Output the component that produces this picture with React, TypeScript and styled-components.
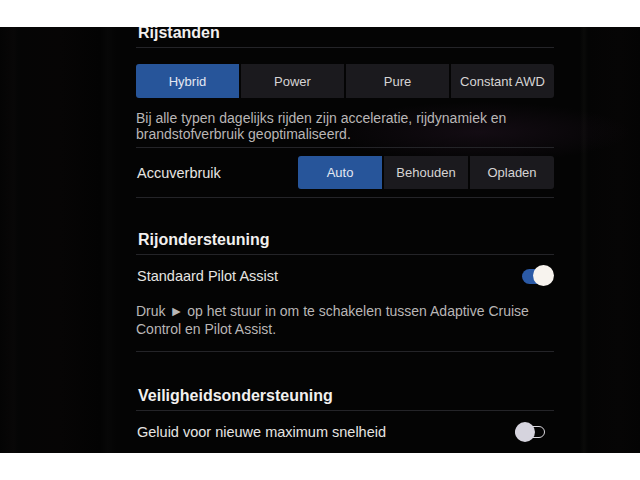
import styled, { createGlobalStyle } from "styled-components";

const GlobalStyle = createGlobalStyle`
  html, body {
    margin: 0;
    padding: 0;
    background: #ffffff;
  }
  body {
    font-family: "Liberation Sans", Arial, sans-serif;
  }
`;

const Page = styled.div`
  width: 640px;
  height: 480px;
  display: flex;
  flex-direction: column;
  background: #ffffff;
`;

const WhiteBand = styled.div`
  height: 27px;
  flex: none;
`;

const Photo = styled.div`
  height: 426px;
  flex: none;
  overflow: hidden;
  display: flex;
  background:
    radial-gradient(ellipse 150px 30px at 480px 105px, rgba(55, 30, 55, 0.3), transparent),
    linear-gradient(90deg, #040404 0, #080707 14px, #050505 18px, #060505 60px, #030303 100px, #070707 108px, #040404 116px, #040404 580px, #0a0a09 584px, #040404 588px, #060505 620px, #040404 640px);
`;

const Screen = styled.div`
  margin-left: 136px;
  width: 418px;
  margin-top: -16px;
  display: flex;
  flex-direction: column;
  color: #e9e7e6;
`;

const SectionTitle = styled.div<{ $top: number }>`
  padding: ${(p) => p.$top}px 0 4px 2px;
  font-size: 16px;
  line-height: 20px;
  font-weight: 700;
  color: #f2f0ef;
  border-bottom: 1px solid #242428;
`;

const Segmented = styled.div<{ $cols: number }>`
  display: grid;
  grid-template-columns: repeat(${(p) => p.$cols}, 1fr);
  gap: 2px;
  border-radius: 3px;
  overflow: hidden;
`;

const Segment = styled.div<{ $active?: boolean }>`
  height: 34px;
  display: flex;
  align-items: center;
  justify-content: center;
  font-size: 13px;
  color: ${(p) => (p.$active ? "#e4e8f2" : "#d6d4d4")};
  background: ${(p) => (p.$active ? "#27559a" : "#1b1a1e")};
`;

const ModeBlock = styled.div`
  padding-top: 16px;
  border-bottom: 1px solid #242428;
`;

const Description = styled.p<{ $lh: number; $pt: number; $pb: number }>`
  margin: 0;
  padding: ${(p) => p.$pt}px 0 ${(p) => p.$pb}px 0;
  font-size: 14px;
  line-height: ${(p) => p.$lh}px;
  color: #b9b6b6;
`;

const Row = styled.div<{ $h: number }>`
  height: ${(p) => p.$h}px;
  display: flex;
  align-items: center;
  justify-content: space-between;
`;

const Label = styled.span`
  font-size: 14.5px;
  color: #e6e4e2;
  padding-left: 1px;
`;

const Divided = styled.div`
  border-bottom: 1px solid #242428;
`;

const AccuSegments = styled(Segmented)`
  width: 256px;
  & > div {
    height: 33px;
  }
`;

const Switch = styled.div<{ $on?: boolean }>`
  position: relative;
  width: 32px;
  height: 22px;
  margin-right: ${(p) => (p.$on ? 0 : 7)}px;
`;

const Track = styled.div<{ $on?: boolean }>`
  position: absolute;
  left: 0;
  top: ${(p) => (p.$on ? 4 : 5)}px;
  width: ${(p) => (p.$on ? 24 : 30)}px;
  height: ${(p) => (p.$on ? 15 : 12)}px;
  border-radius: 8px;
  box-sizing: border-box;
  background: ${(p) => (p.$on ? "#2b5aa6" : "transparent")};
  border: ${(p) => (p.$on ? "none" : "1.5px solid #d9d6dc")};
`;

const Knob = styled.div<{ $on?: boolean }>`
  position: absolute;
  top: ${(p) => (p.$on ? 0 : 1)}px;
  left: ${(p) => (p.$on ? 11 : 0)}px;
  width: ${(p) => (p.$on ? 21 : 20)}px;
  height: ${(p) => (p.$on ? 21 : 20)}px;
  border-radius: 50%;
  background: ${(p) => (p.$on ? "#f7f3ee" : "#d6d4de")};
`;

function Toggle({ on }: { on?: boolean }) {
  return (
    <Switch $on={on}>
      <Track $on={on} />
      <Knob $on={on} />
    </Switch>
  );
}

const driveModes = ["Hybrid", "Power", "Pure", "Constant AWD"];
const batteryModes = ["Auto", "Behouden", "Opladen"];

export default function App() {
  return (
    <>
      <GlobalStyle />
      <Page>
        <WhiteBand />
        <Photo>
          <Screen>
            <SectionTitle $top={12}>Rijstanden</SectionTitle>
            <ModeBlock>
              <Segmented $cols={4}>
                {driveModes.map((m, i) => (
                  <Segment key={m} $active={i === 0}>
                    {m}
                  </Segment>
                ))}
              </Segmented>
              <Description $lh={16} $pt={12} $pb={5}>
                Bij alle typen dagelijks rijden zijn acceleratie, rijdynamiek en
                <br />
                brandstofverbruik geoptimaliseerd.
              </Description>
            </ModeBlock>
            <Divided>
              <Row $h={49}>
                <Label>Accuverbruik</Label>
                <AccuSegments $cols={3}>
                  {batteryModes.map((m, i) => (
                    <Segment key={m} $active={i === 0}>
                      {m}
                    </Segment>
                  ))}
                </AccuSegments>
              </Row>
            </Divided>
            <SectionTitle $top={32}>Rijondersteuning</SectionTitle>
            <Divided>
              <Row $h={42}>
                <Label>Standaard Pilot Assist</Label>
                <Toggle on />
              </Row>
              <Description $lh={18} $pt={5} $pb={13}>
                Druk ► op het stuur in om te schakelen tussen Adaptive Cruise
                <br />
                Control en Pilot Assist.
              </Description>
            </Divided>
            <SectionTitle $top={34}>Veiligheidsondersteuning</SectionTitle>
            <Row $h={42}>
              <Label>Geluid voor nieuwe maximum snelheid</Label>
              <Toggle />
            </Row>
          </Screen>
        </Photo>
        <WhiteBand />
      </Page>
    </>
  );
}
